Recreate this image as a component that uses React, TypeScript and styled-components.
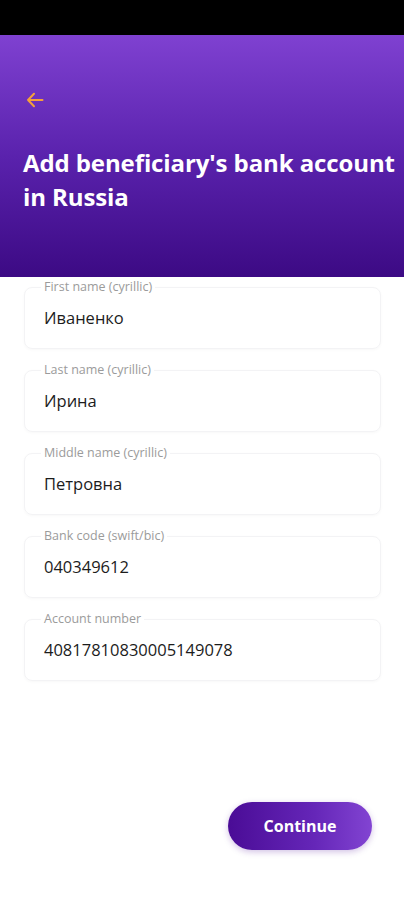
import React from 'react'
import styled, { createGlobalStyle } from 'styled-components'

const GlobalStyle = createGlobalStyle`
  body {
    margin: 0;
    background: #ffffff;
    font-family: 'Open Sans', 'Noto Sans', sans-serif;
  }
`

const Screen = styled.div`
  width: 404px;
  height: 900px;
  display: flex;
  flex-direction: column;
  background: #ffffff;
  overflow: hidden;
`

const StatusBar = styled.div`
  height: 35px;
  background: #000000;
  flex-shrink: 0;
`

const Header = styled.header`
  height: 242px;
  flex-shrink: 0;
  box-sizing: border-box;
  padding: 56px 2px 0 23px;
  background: linear-gradient(180deg, #7f41d1 0%, #5a22ad 50%, #3c0a84 100%);
  display: flex;
  flex-direction: column;
`

const BackButton = styled.button`
  width: 22px;
  height: 18px;
  padding: 0;
  margin-left: 2px;
  border: none;
  background: none;
  display: flex;
  align-items: center;
  cursor: pointer;
`

const Title = styled.h1`
  margin: 37px 0 0;
  font-family: 'Open Sans', sans-serif;
  font-weight: 700;
  font-size: 24px;
  line-height: 34px;
  letter-spacing: -0.1px;
  color: #ffffff;
`

const Form = styled.form`
  display: flex;
  flex-direction: column;
  gap: 21px;
  padding: 10px 23px 0 24px;
`

const Field = styled.div`
  position: relative;
  height: 62px;
  box-sizing: border-box;
  border: 1px solid #f3f3f5;
  border-radius: 8px;
  box-shadow: 0 1px 3px rgba(0, 0, 0, 0.03);
  padding: 19px 19px 0;
`

const Label = styled.span`
  position: absolute;
  top: -10px;
  left: 16px;
  padding: 0 3px;
  background: #ffffff;
  font-family: 'Open Sans', sans-serif;
  font-size: 12.5px;
  line-height: 18px;
  color: #9b9b9b;
`

const Value = styled.div`
  font-family: 'Open Sans', 'Noto Sans', sans-serif;
  font-size: 16.5px;
  line-height: 22px;
  color: #1c1c1c;
`

const Footer = styled.div`
  margin-top: auto;
  display: flex;
  justify-content: flex-end;
  padding: 0 32px 50px 0;
`

const ContinueButton = styled.button`
  width: 144px;
  height: 48px;
  border: none;
  border-radius: 24px;
  background: linear-gradient(90deg, #4a0c96 0%, #6526b8 60%, #8244d2 100%);
  box-shadow: 0 2px 6px rgba(74, 12, 150, 0.25);
  font-family: 'Open Sans', sans-serif;
  font-weight: 700;
  font-size: 16px;
  color: #ffffff;
  cursor: pointer;
`

const fields = [
  { label: 'First name (cyrillic)', value: 'Иваненко' },
  { label: 'Last name (cyrillic)', value: 'Ирина' },
  { label: 'Middle name (cyrillic)', value: 'Петровна' },
  { label: 'Bank code (swift/bic)', value: '040349612' },
  { label: 'Account number', value: '40817810830005149078' },
]

const BackArrow = () => (
  <svg width="20" height="18" viewBox="0 0 20 18" fill="none">
    <path d="M17.5 9H3M9 2.8L3 9l6 6.2" stroke="#f5a13a" strokeWidth="2" strokeLinecap="round" strokeLinejoin="round" />
  </svg>
)

export default function App() {
  return (
    <Screen>
      <GlobalStyle />
      <StatusBar />
      <Header>
        <BackButton aria-label="Back">
          <BackArrow />
        </BackButton>
        <Title>Add beneficiary's bank account in Russia</Title>
      </Header>

      <Form>
        {fields.map((f) => (
          <Field key={f.label}>
            <Label>{f.label}</Label>
            <Value>{f.value}</Value>
          </Field>
        ))}
      </Form>

      <Footer>
        <ContinueButton type="button">Continue</ContinueButton>
      </Footer>
    </Screen>
  )
}
